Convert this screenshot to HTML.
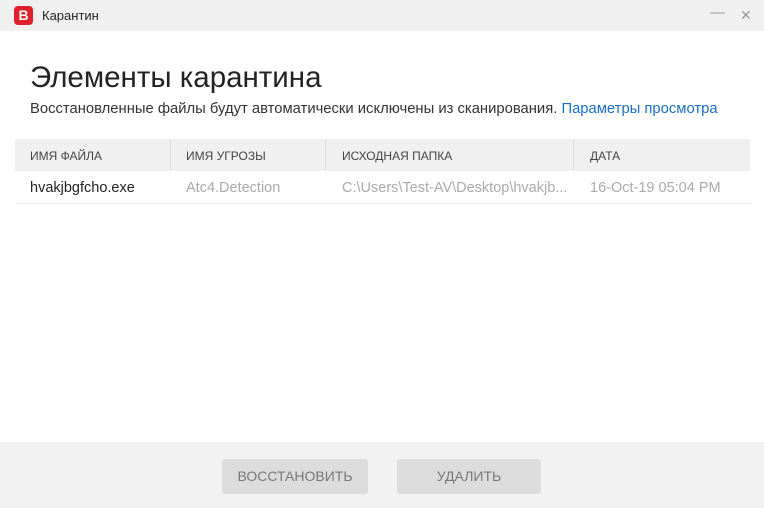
<!DOCTYPE html><html><head><style>
body{margin:0;width:764px;height:508px;background:#fff;font-family:"Liberation Sans",sans-serif;position:relative;overflow:hidden}
.tb{position:absolute;left:0;top:0;width:764px;height:31px;background:#f0f0f0}
.logo{position:absolute;left:14px;top:6px;width:19px;height:19px;background:#e0202a;border-radius:4px;color:#fff;font-weight:bold;font-size:14px;text-align:center;line-height:19px}
.t{position:absolute;font-size:13px;color:#222;white-space:nowrap}
.hdr{position:absolute;left:15px;top:139px;width:735px;height:32px;background:#f0f0f0}
.sep{position:absolute;top:139px;width:1px;height:32px;background:#e0e0e0}
.h{position:absolute;top:149px;font-size:12px;color:#444}
.r{position:absolute;top:180px;font-size:14.5px;color:#aaa;white-space:nowrap}
.ft{position:absolute;left:0;top:442px;width:764px;height:66px;background:#f2f2f2}
.btn{position:absolute;top:459px;height:35px;background:#dcdcdc;border-radius:3px;color:#777;font-size:14px;text-align:center;line-height:35px}
</style></head><body>
<div class="tb"></div><div class="logo">B</div>
<div class="t" style="left:42px;top:8px">Карантин</div>
<div class="t" style="left:710px;top:4px;color:#999;font-size:15px">—</div>
<div class="t" style="left:740px;top:7px;color:#999;font-size:14px">✕</div>
<div class="t" style="left:30px;top:61px;font-size:29.5px;color:#222">Элементы карантина</div>
<div class="t" style="left:30px;top:101px;font-size:14.8px;color:#333">Восстановленные файлы будут автоматически исключены из сканирования. <span style="color:#1a6fc4">Параметры просмотра</span></div>
<div class="hdr"></div>
<div class="sep" style="left:170px"></div><div class="sep" style="left:325px"></div><div class="sep" style="left:573px"></div>
<div class="h" style="left:30px">ИМЯ ФАЙЛА</div><div class="h" style="left:186px">ИМЯ УГРОЗЫ</div><div class="h" style="left:342px">ИСХОДНАЯ ПАПКА</div><div class="h" style="left:590px">ДАТА</div>
<div class="r" style="left:30px;color:#222">hvakjbgfcho.exe</div>
<div class="r" style="left:186px">Atc4.Detection</div>
<div class="r" style="left:342px">C:\Users\Test-AV\Desktop\hvakjb...</div>
<div class="r" style="left:590px">16-Oct-19 05:04 PM</div>
<div style="position:absolute;left:15px;top:203px;width:735px;height:1px;background:#eee"></div>
<div class="ft"></div>
<div class="btn" style="left:222px;width:146px">ВОССТАНОВИТЬ</div>
<div class="btn" style="left:397px;width:144px">УДАЛИТЬ</div>
</body></html>
